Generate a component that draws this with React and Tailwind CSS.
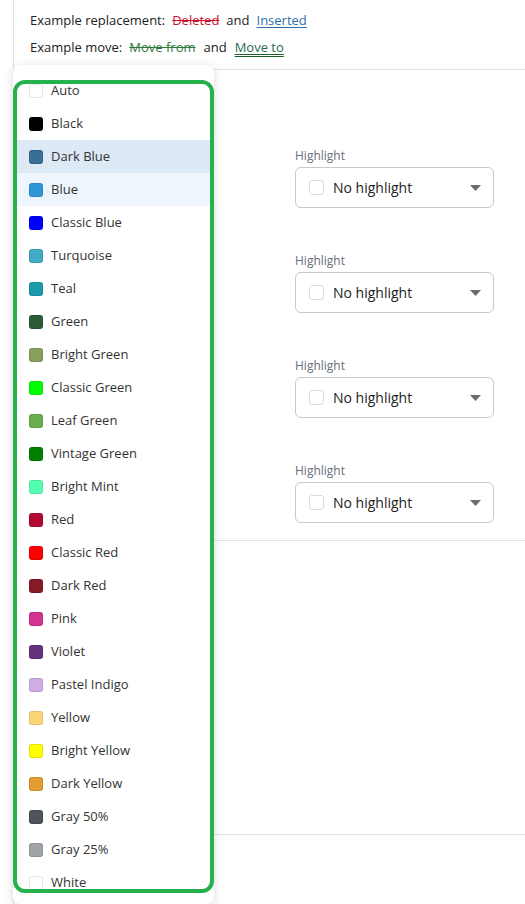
import React from "react";

const colors = [
  { name: "Auto", hex: "#ffffff" },
  { name: "Black", hex: "#000000" },
  { name: "Dark Blue", hex: "#3a6e96" },
  { name: "Blue", hex: "#2e96d6" },
  { name: "Classic Blue", hex: "#0000ff" },
  { name: "Turquoise", hex: "#41adc4" },
  { name: "Teal", hex: "#1b9aa9" },
  { name: "Green", hex: "#2b5c36" },
  { name: "Bright Green", hex: "#87a05b" },
  { name: "Classic Green", hex: "#00ff00" },
  { name: "Leaf Green", hex: "#6aaf4f" },
  { name: "Vintage Green", hex: "#007f00" },
  { name: "Bright Mint", hex: "#55ffb1" },
  { name: "Red", hex: "#b10a31" },
  { name: "Classic Red", hex: "#ff0000" },
  { name: "Dark Red", hex: "#861a27" },
  { name: "Pink", hex: "#d3348f" },
  { name: "Violet", hex: "#66317a" },
  { name: "Pastel Indigo", hex: "#cfaee6" },
  { name: "Yellow", hex: "#fad677" },
  { name: "Bright Yellow", hex: "#ffff00" },
  { name: "Dark Yellow", hex: "#e39c2e" },
  { name: "Gray 50%", hex: "#4f545c" },
  { name: "Gray 25%", hex: "#a0a3a8" },
  { name: "White", hex: "#ffffff" },
];

function HighlightSelect() {
  return (
    <div>
      <div className="mb-[3px] text-[12px] leading-[17px] text-[#66707a]">
        Highlight
      </div>
      <div className="flex h-[41px] w-[199px] items-center rounded-[6px] border border-[#c9c9c9] bg-white pl-[13px] pr-[12px]">
        <span className="h-[15px] w-[15px] rounded-[3px] border border-[#dcdcdc] bg-white" />
        <span className="ml-[9px] flex-1 text-[14px] text-[#222]">
          No highlight
        </span>
        <svg width="11" height="6" viewBox="0 0 11 6">
          <path d="M0 0 L11 0 L5.5 6 Z" fill="#6b6b6b" />
        </svg>
      </div>
    </div>
  );
}

export default function App() {
  return (
    <div
      className="relative min-h-[904px] bg-white"
      style={{ fontFamily: '"Open Sans", "Noto Sans", sans-serif' }}
    >
      <div className="ml-[13px] min-h-[904px] border-l border-[#e3e3e3]">
        {/* Example text */}
        <div className="border-b border-[#e3e3e3] px-[16px] pt-[7px] pb-[8px] text-[13px] leading-[27px] text-[#222]">
          <div>
            Example replacement:
            <span className="ml-[7px] text-[#c8102e] line-through">Deleted</span>
            <span className="mx-[7px]">and</span>
            <span className="text-[#2f6fad] underline underline-offset-2">
              Inserted
            </span>
          </div>
          <div>
            Example move:
            <span className="ml-[7px] text-[#2e7a3a] line-through decoration-[#2e7a3a]">
              Move from
            </span>
            <span className="mx-[8px]">and</span>
            <span className="text-[#2c6a4e] underline decoration-double decoration-[#1e5e2a] underline-offset-2">
              Move to
            </span>
          </div>
        </div>

        {/* Highlights */}
        <div className="border-b border-[#e3e3e3] px-[16px] pt-[77px] pb-[17px]">
          <div className="grid grid-cols-[249px_199px] gap-x-[16px] gap-y-[44px]">
            {[0, 1, 2, 3].map((i) => (
              <React.Fragment key={i}>
                <div />
                <HighlightSelect />
              </React.Fragment>
            ))}
          </div>
        </div>

        <div className="h-[294px] border-b border-[#e3e3e3]" />
      </div>

      {/* Colour dropdown */}
      <div className="absolute left-[13px] top-[65px] h-[839px] w-[201px] rounded-[7px] bg-white pt-[15px] shadow-[0_2px_10px_rgba(0,0,0,0.16)]">
        <div className="h-[813px] overflow-hidden rounded-[12px] border-4 border-[#27b14d]">
          <div className="-mt-[10px]">
            {colors.map((c) => (
              <div
                key={c.name}
                className={
                  "flex h-[33px] items-center pl-[12px] text-[13px] text-[#333] " +
                  (c.name === "Dark Blue"
                    ? "bg-[#dde9f4]"
                    : c.name === "Blue"
                    ? "bg-[#eff5fd]"
                    : "")
                }
              >
                <span
                  className="h-[14px] w-[14px] rounded-[3px] border border-black/10"
                  style={{ backgroundColor: c.hex }}
                />
                <span className="ml-[8px]">{c.name}</span>
              </div>
            ))}
          </div>
        </div>
      </div>
    </div>
  );
}
